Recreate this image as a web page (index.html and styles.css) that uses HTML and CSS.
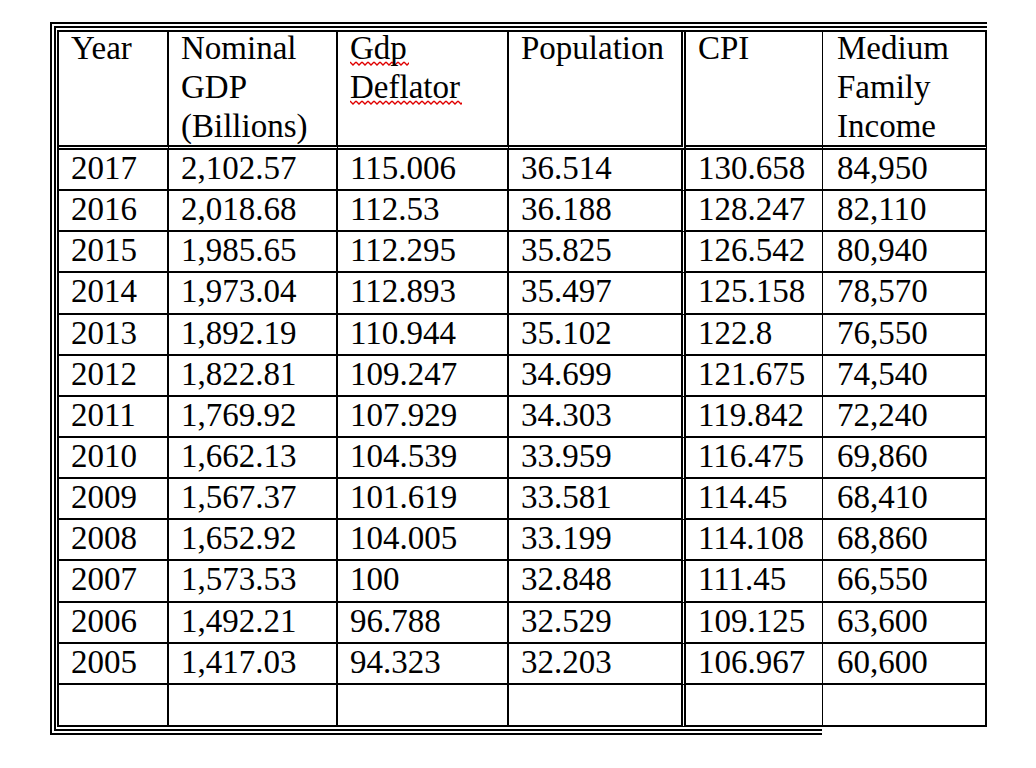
FILE: index.html
```html
<!DOCTYPE html>
<html lang="en">
<head>
<meta charset="utf-8">
<title>Economic indicators</title>
<link rel="stylesheet" href="styles.css">
</head>
<body>
<div class="sheet">
  <div class="grid" role="table">
    <div class="c h c1"><div class="hd">Year</div></div>
    <div class="c h c2"><div class="hd">Nominal<br>GDP<br>(Billions)</div></div>
    <div class="c h c3"><div class="hd"><span class="sp">Gdp</span><br><span class="sp">Deflator</span></div></div>
    <div class="c h c4"><div class="hd">Population</div></div>
    <div class="c h c5"><div class="hd">CPI</div></div>
    <div class="c h c6"><div class="hd">Medium<br>Family<br>Income</div></div>

    <div class="c c1">2017</div><div class="c c2">2,102.57</div><div class="c c3">115.006</div><div class="c c4">36.514</div><div class="c c5">130.658</div><div class="c c6">84,950</div>
    <div class="c c1">2016</div><div class="c c2">2,018.68</div><div class="c c3">112.53</div><div class="c c4">36.188</div><div class="c c5">128.247</div><div class="c c6">82,110</div>
    <div class="c c1">2015</div><div class="c c2">1,985.65</div><div class="c c3">112.295</div><div class="c c4">35.825</div><div class="c c5">126.542</div><div class="c c6">80,940</div>
    <div class="c c1">2014</div><div class="c c2">1,973.04</div><div class="c c3">112.893</div><div class="c c4">35.497</div><div class="c c5">125.158</div><div class="c c6">78,570</div>
    <div class="c c1">2013</div><div class="c c2">1,892.19</div><div class="c c3">110.944</div><div class="c c4">35.102</div><div class="c c5">122.8</div><div class="c c6">76,550</div>
    <div class="c c1">2012</div><div class="c c2">1,822.81</div><div class="c c3">109.247</div><div class="c c4">34.699</div><div class="c c5">121.675</div><div class="c c6">74,540</div>
    <div class="c c1">2011</div><div class="c c2">1,769.92</div><div class="c c3">107.929</div><div class="c c4">34.303</div><div class="c c5">119.842</div><div class="c c6">72,240</div>
    <div class="c c1">2010</div><div class="c c2">1,662.13</div><div class="c c3">104.539</div><div class="c c4">33.959</div><div class="c c5">116.475</div><div class="c c6">69,860</div>
    <div class="c c1">2009</div><div class="c c2">1,567.37</div><div class="c c3">101.619</div><div class="c c4">33.581</div><div class="c c5">114.45</div><div class="c c6">68,410</div>
    <div class="c c1">2008</div><div class="c c2">1,652.92</div><div class="c c3">104.005</div><div class="c c4">33.199</div><div class="c c5">114.108</div><div class="c c6">68,860</div>
    <div class="c c1">2007</div><div class="c c2">1,573.53</div><div class="c c3">100</div><div class="c c4">32.848</div><div class="c c5">111.45</div><div class="c c6">66,550</div>
    <div class="c c1">2006</div><div class="c c2">1,492.21</div><div class="c c3">96.788</div><div class="c c4">32.529</div><div class="c c5">109.125</div><div class="c c6">63,600</div>
    <div class="c c1">2005</div><div class="c c2">1,417.03</div><div class="c c3">94.323</div><div class="c c4">32.203</div><div class="c c5">106.967</div><div class="c c6">60,600</div>
    <div class="c c1"></div><div class="c c2"></div><div class="c c3"></div><div class="c c4"></div><div class="c c5"></div><div class="c c6"></div>
  </div>
</div>
</body>
</html>
```

FILE: styles.css
```css
html, body {
  margin: 0;
  padding: 0;
  background: #ffffff;
}

body {
  font-family: "Liberation Serif", "Times New Roman", serif;
  font-size: 33px;
  color: #000000;
}

.sheet {
  margin: 22px 0 0 50px;
  width: 937px;
  box-sizing: border-box;
  padding: 8px 0 8px 7px;
  background:
    linear-gradient(#000, #000) 0 0 / 100% 2px no-repeat,
    linear-gradient(#000, #000) 4px 4px / calc(100% - 4px) 2px no-repeat,
    linear-gradient(#000, #000) 0 0 / 2px 100% no-repeat,
    linear-gradient(#000, #000) 4px 4px / 2px calc(100% - 8px) no-repeat,
    linear-gradient(#000, #000) 0 100% / 772px 2px no-repeat,
    linear-gradient(#000, #000) 4px calc(100% - 4px) / 768px 2px no-repeat;
}

.grid {
  display: grid;
  grid-template-columns: 110px 169px 171px 177px 137px 164px;
  grid-template-rows: 118px repeat(13, 41.15px) 42px;
  width: 930px;
  box-sizing: border-box;
  border-top: 2px solid #000;
  border-left: 2px solid #000;
}

.c {
  box-sizing: border-box;
  border-right: 2px solid #000;
  border-bottom: 2px solid #000;
  padding-left: 12px;
  line-height: 36px;
  white-space: nowrap;
  overflow: visible;
}

.c4 {
  border-right: 5px double #000;
}

.c5 {
  border-right: 1px solid #000;
}

.c6 {
  padding-left: 14px;
}

.h {
  border-bottom-width: 5px;
  border-bottom-style: double;
  line-height: 39px;
}

.h.c4 {
  border-bottom: 5px double #000;
}

.hd {
  margin-top: -3px;
}

.sp {
  padding-right: 2px;
  background-image: url("data:image/svg+xml,%3Csvg xmlns='http://www.w3.org/2000/svg' width='6' height='5'%3E%3Cpath d='M0 1 L3 4 L6 1' fill='none' stroke='%23e00000' stroke-width='1.3'/%3E%3C/svg%3E");
  background-repeat: repeat-x;
  background-size: 6px 5px;
  background-position: 0 100%;
}
```
